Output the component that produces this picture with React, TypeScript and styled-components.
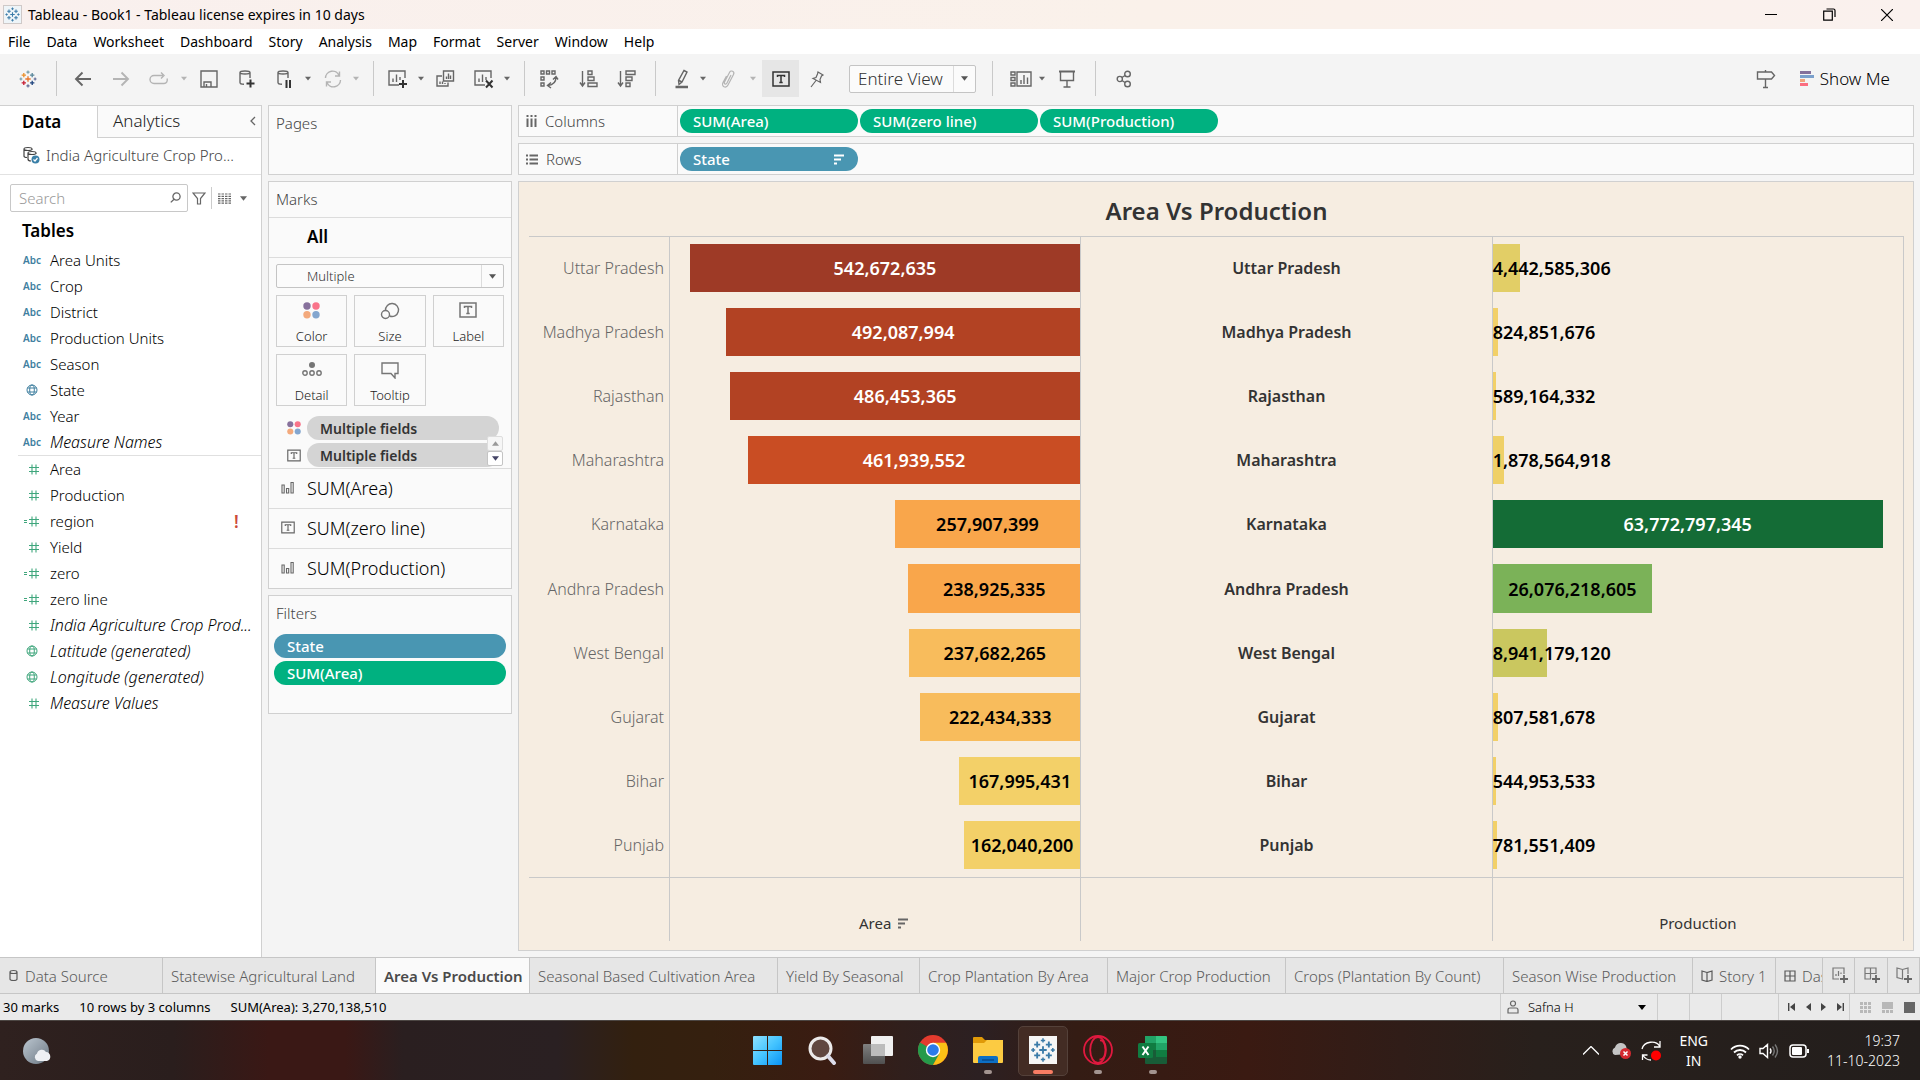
import React from "react";
import styled, { createGlobalStyle, css } from "styled-components";

const GlobalStyle = createGlobalStyle`
  *, *::before, *::after { box-sizing: border-box; }
  body { margin: 0; }
  body, button, input, select {
    font-family: "Noto Sans", "Open Sans", sans-serif;
    font-size: 15px;
    font-weight: 350;
    color: #000;
  }
  button { background: none; border: 0; padding: 0; margin: 0; cursor: pointer; }
  ul { list-style: none; margin: 0; padding: 0; }
  h1, h2, h3 { margin: 0; font-size: inherit; font-weight: inherit; }
  svg { display: block; flex: none; }
`;

const LINE = "#d0d0d0";
const INK = "#666666";
const FAINT = "#b4b4b4";
const BLUE = "#4996b2";
const GREEN = "#00b180";

/* ---------- window frame ---------- */

const Page = styled.div`
  display: flex;
  flex-direction: column;
  height: 100vh;
  min-height: 900px;
  overflow: hidden;
  background: #f4f4f4;
`;

const TitleBar = styled.header`
  flex: none;
  display: flex;
  align-items: center;
  height: 29px;
  padding: 0 4px 0 3px;
  background: linear-gradient(90deg, #f9f0ee, #faf1ea 60%, #faf1ee);
`;

const AppBadge = styled.span`
  display: flex;
  padding: 1px;
  background: #eef4f8;
  border: 1px solid #cfc9c8;
`;

const WindowTitle = styled.h1`
  flex: 1;
  padding-left: 6px;
  font-size: 14px;
  font-weight: 400;
`;

const WindowButton = styled.button`
  display: flex;
  align-items: center;
  justify-content: center;
  width: 58px;
  height: 29px;
`;

const MenuBar = styled.nav`
  flex: none;
  display: flex;
  align-items: center;
  gap: 16px;
  height: 25px;
  padding-left: 8px;
  background: #fff;
  button { font-size: 14px; font-weight: 400; }
`;

/* ---------- toolbar ---------- */

const ToolBar = styled.div`
  flex: none;
  display: flex;
  align-items: center;
  height: 51px;
  padding: 0 30px 2px 0;
`;

const Tool = styled.button<{ $gap?: number; $on?: boolean; $faint?: boolean }>`
  display: flex;
  align-items: center;
  justify-content: center;
  margin-left: ${(p) => p.$gap ?? 14}px;
  width: ${(p) => (p.$on ? 37 : 24)}px;
  height: 37px;
  color: ${(p) => (p.$faint ? FAINT : INK)};
  ${(p) => p.$on && css`background: #e6e6e6; color: #333;`}
`;

const DropMark = styled(Tool)`
  width: 10px;
`;

const Separator = styled.span<{ $gap: number }>`
  width: 1px;
  height: 35px;
  margin-left: ${(p) => p.$gap}px;
  background: #c9c9c9;
`;

const SelectBox = styled.label<{ $height: number }>`
  display: grid;
  grid-template-columns: 1fr 22px;
  align-items: center;
  height: ${(p) => p.$height}px;
  border: 1px solid #c4c4c4;
  border-radius: 2px;
  background: #fbfbfb;
  select {
    grid-area: 1 / 1 / 2 / 3;
    height: 100%;
    width: 100%;
    padding: 0 8px;
    border: 0;
    background: none;
    appearance: none;
    color: #333;
  }
  span {
    grid-area: 1 / 2;
    display: flex;
    align-items: center;
    justify-content: center;
    height: 100%;
    border-left: 1px solid #dcdcdc;
    color: #555;
    pointer-events: none;
  }
`;

const ViewSelect = styled(SelectBox)`
  width: 127px;
  margin-left: 20px;
  select { font-size: 17px; }
`;

const MarkSelect = styled(SelectBox)`
  margin: 6px 7px 0;
  select { font-size: 13px; padding-left: 30px; }
`;

const Spacer = styled.span`
  flex: 1;
`;

const ShowMe = styled.button`
  display: flex;
  align-items: center;
  gap: 6px;
  margin-left: 22px;
  font-size: 17px;
`;

/* ---------- workspace ---------- */

const Workspace = styled.main`
  flex: 1;
  min-height: 0;
  display: grid;
  grid-template-columns: 262px 244px 1fr;
  column-gap: 6px;
`;

const DataPane = styled.aside`
  display: flex;
  flex-direction: column;
  background: #fff;
  border: 1px solid ${LINE};
  border-width: 1px 1px 0 0;
`;

const PaneTabs = styled.div`
  display: grid;
  grid-template-columns: 97px 1fr;
  height: 32px;
`;

const PaneTab = styled.button<{ $active?: boolean }>`
  display: flex;
  align-items: center;
  justify-content: space-between;
  padding: 0 5px 2px ${(p) => (p.$active ? 22 : 15)}px;
  font-size: 17px;
  ${(p) => p.$active
    ? css`font-weight: 600;`
    : css`background: #fafafa; border: 1px solid ${LINE}; border-width: 0 0 1px 1px; color: #222;`}
`;

const SourceRow = styled.button`
  flex: none;
  display: flex;
  align-items: center;
  gap: 6px;
  height: 37px;
  padding: 0 0 2px 22px;
  border-bottom: 1px solid #e2e2e2;
  color: #444;
`;

const SearchRow = styled.div`
  display: flex;
  align-items: center;
  padding: 9px 0 0 10px;
  color: ${INK};
`;

const SearchBox = styled.label`
  display: flex;
  align-items: center;
  width: 178px;
  height: 28px;
  padding: 0 6px 1px 8px;
  border: 1px solid #c8c8c8;
  border-radius: 2px;
  input {
    flex: 1;
    min-width: 0;
    border: 0;
    padding: 0;
    outline: 0;
    background: none;
  }
  input::placeholder { color: #999; opacity: 1; }
`;

const IconButton = styled.button<{ $width: number }>`
  display: flex;
  align-items: center;
  justify-content: center;
  width: ${(p) => p.$width}px;
  height: 22px;
  color: ${INK};
`;

const ThinRule = styled.span`
  width: 1px;
  height: 22px;
  margin: 0 1px;
  background: #ccc;
`;

const TablesTitle = styled.h2`
  padding: 7px 0 4px 22px;
  font-size: 17px;
  line-height: 24px;
  font-weight: 600;
`;

const FieldList = styled.ul`
  & + & {
    margin-left: 18px;
    border-top: 1px solid #e0e0e0;
  }
  & + & li { padding-left: 4px; }
`;

const Field = styled.li<{ $italic?: boolean }>`
  display: grid;
  grid-template-columns: 28px 1fr auto;
  align-items: center;
  height: 26px;
  padding: 0 22px;
  white-space: nowrap;
  ${(p) => p.$italic && css`font-size: 16px; font-style: italic; padding-right: 4px;`}
`;

const FieldKind = styled.span<{ $blue?: boolean }>`
  display: flex;
  justify-content: center;
  width: 20px;
  font-size: 10px;
  font-weight: 600;
  font-style: normal;
  color: ${(p) => (p.$blue ? "#3f7f9f" : "#3fa67c")};
`;

const Alert = styled.span`
  width: 5px;
  color: #cc4b3a;
  font-size: 17px;
  font-weight: 600;
`;

/* ---------- shelves ---------- */

const Cards = styled.div`
  display: flex;
  flex-direction: column;
  gap: 6px;
`;

const Card = styled.section<{ $height: number }>`
  flex: none;
  min-height: ${(p) => p.$height}px;
  background: #fafafa;
  border: 1px solid ${LINE};
`;

const CardTitle = styled.h3`
  display: flex;
  align-items: center;
  height: 35px;
  padding: 0 0 1px 7px;
  color: #444;
`;

const MarkLayer = styled.button<{ $active?: boolean }>`
  display: grid;
  grid-template-columns: 38px 1fr;
  align-items: center;
  width: 100%;
  height: 40px;
  padding-bottom: 2px;
  border-top: 1px solid #dcdcdc;
  text-align: left;
  font-size: ${(p) => (p.$active ? 17 : 18)}px;
  font-weight: ${(p) => (p.$active ? 600 : 300)};
  svg { justify-self: center; color: ${INK}; }
  span { grid-column: 2; }
`;

const MarkOptions = styled.div`
  border-top: 1px solid #dcdcdc;
`;

const MarkButtons = styled.div`
  display: grid;
  grid-template-columns: repeat(3, 1fr);
  gap: 7px;
  padding: 7px;
`;

const MarkButton = styled.button`
  display: flex;
  flex-direction: column;
  align-items: center;
  justify-content: space-between;
  height: 52px;
  padding: 6px 0 1px;
  border: 1px solid ${LINE};
  font-size: 13px;
  line-height: 18px;
  color: #222;
  svg { color: #757575; }
`;

const Encodings = styled.div`
  position: relative;
  display: flex;
  flex-direction: column;
  gap: 3px;
  padding: 3px 12px 1px 18px;
`;

const Encoding = styled.div`
  display: grid;
  grid-template-columns: 14px 1fr;
  align-items: center;
  gap: 6px;
  color: ${INK};
`;

const Pill = styled.button<{ $tone: string }>`
  display: flex;
  align-items: center;
  justify-content: space-between;
  height: 24px;
  padding: 0 13px;
  border-radius: 12px;
  background: ${(p) => p.$tone};
  color: #fff;
  font-weight: 500;
`;

const FieldsPill = styled(Pill)`
  color: #333;
  font-size: 14px;
  font-weight: 600;
`;

const Spinner = styled.div`
  position: absolute;
  right: 8px;
  bottom: 2px;
  display: grid;
  button {
    display: flex;
    align-items: center;
    justify-content: center;
    width: 16px;
    height: 15px;
    border: 1px solid #c4c4c4;
    border-radius: 2px;
    background: #fff;
    color: #446;
  }
  button:first-child { color: #999; border-color: #ddd; background: #f6f6f6; }
`;

const FilterPills = styled.div`
  display: grid;
  gap: 3px;
  padding: 3px 5px;
`;

const Canvas = styled.div`
  min-width: 0;
  display: flex;
  flex-direction: column;
  gap: 6px;
  padding: 0 6px 6px 0;
`;

const Shelf = styled.section`
  flex: none;
  display: grid;
  grid-template-columns: 159px 1fr;
  height: 32px;
  background: #fafafa;
  border: 1px solid ${LINE};
`;

const ShelfName = styled.h3`
  display: flex;
  align-items: center;
  gap: 8px;
  padding-left: 7px;
  border-right: 1px solid ${LINE};
  color: #444;
  svg { color: ${INK}; }
`;

const ShelfPills = styled.div`
  display: flex;
  align-items: center;
  gap: 2px;
  padding-left: 2px;
  button { width: 178px; }
`;

/* ---------- chart ---------- */

const Sheet = styled.section`
  flex: 1;
  min-height: 0;
  display: flex;
  flex-direction: column;
  padding: 0 9px 9px 10px;
  background: #f6ede1;
  border: 1px solid ${LINE};
`;

const SheetTitle = styled.h2`
  display: flex;
  align-items: center;
  justify-content: center;
  height: 54px;
  padding-top: 2px;
  font-size: 24px;
  font-weight: 600;
  color: #333;
`;

const Chart = styled.div`
  flex: 1;
  min-height: 0;
  display: flex;
  flex-direction: column;
  border-right: 1px solid #c9c9c9;
  box-shadow: inset 0 1px #c9c9c9;
`;

const ChartRow = styled.div`
  flex: 1;
  min-height: 0;
  display: grid;
  grid-template-columns: 140px repeat(3, 1fr);
`;

const AxisRow = styled(ChartRow)`
  flex: none;
  height: 64px;
  border-top: 1px solid #c9c9c9;
`;

const StateLabel = styled.div`
  display: flex;
  align-items: center;
  justify-content: flex-end;
  padding-right: 5px;
  font-size: 16px;
  font-weight: 300;
  color: #666;
`;

const Cell = styled.div`
  display: flex;
  align-items: center;
  justify-content: center;
  border-left: 1px solid #c9c9c9;
  font-size: 16px;
  font-weight: 600;
  color: #333;
`;

const AxisCell = styled(Cell)`
  align-items: flex-end;
  padding-bottom: 8px;
  font-size: 15px;
  font-weight: 400;
`;

const AxisName = styled.span`
  position: relative;
  svg { position: absolute; left: calc(100% + 6px); top: 5px; color: ${INK}; }
`;

const BarCell = styled.div<{ $side: "start" | "end" }>`
  display: grid;
  grid-template-columns: 100%;
  align-items: center;
  justify-items: ${(p) => p.$side};
  border-left: 1px solid #c9c9c9;
`;

const Bar = styled.div`
  grid-area: 1 / 1;
  height: 75%;
`;

const BarLabel = styled.span<{ $light?: boolean }>`
  grid-area: 1 / 1;
  text-align: center;
  font-size: 18px;
  font-weight: 600;
  white-space: nowrap;
  color: ${(p) => (p.$light ? "#fff" : "#000")};
`;

/* ---------- sheet tabs and status ---------- */

const SheetTabs = styled.nav`
  flex: none;
  display: flex;
  height: 37px;
  background: #e6e6e6;
  border: 1px solid #c6c6c6;
  border-width: 1px 0;
`;

const SheetTab = styled.button<{ $width: number; $active?: boolean }>`
  flex: 0 0 ${(p) => p.$width}px;
  display: flex;
  align-items: center;
  gap: 6px;
  padding-left: 8px;
  border-right: 1px solid #c6c6c6;
  overflow: hidden;
  white-space: nowrap;
  color: ${(p) => (p.$active ? "#4a4a4a" : "#5a5a5a")};
  ${(p) => p.$active && css`background: #fafafa; font-weight: 600;`}
`;

const NewTab = styled.button`
  flex: 1;
  display: flex;
  align-items: center;
  justify-content: center;
  padding-left: 3px;
  border-right: 1px solid #c6c6c6;
  color: #777;
`;

const StatusBar = styled.footer`
  flex: none;
  display: flex;
  align-items: stretch;
  height: 26px;
  background: #eaeaea;
  font-size: 13px;
`;

const StatusTexts = styled.div`
  flex: 1;
  display: flex;
  align-items: center;
  gap: 20px;
  padding-left: 3px;
  font-weight: 400;
`;

const StatusCell = styled.div<{ $width: number }>`
  display: flex;
  align-items: center;
  width: ${(p) => p.$width}px;
  border-left: 1px solid #cdcdcd;
`;

const UserButton = styled.button`
  flex: 1;
  display: grid;
  grid-template-columns: 21px 1fr 10px;
  align-items: center;
  padding: 0 9px 0 6px;
  font-size: 13px;
  text-align: left;
  svg:first-child { color: ${INK}; }
`;

const NavButtons = styled.div<{ $color: string }>`
  flex: 1;
  display: flex;
  justify-content: space-around;
  padding-left: 4px;
  color: ${(p) => p.$color};
  button { color: inherit; }
`;

/* ---------- taskbar ---------- */

const TaskBar = styled.footer`
  flex: none;
  display: grid;
  grid-template-columns: 1fr auto 1fr;
  align-items: center;
  height: 60px;
  border-top: 1px solid #4c4643;
  background: linear-gradient(90deg, #2f211f 0, #2a1e1d 9%, #3a1815 14%, #3a1815 18%, #2a1f20 21%, #2a2022 29%, #33200f 33%, #35200f 37%, #3a1c12 43%, #301f1c 47%, #2c2022 51%, #341c14 56%, #3a1a12 65%, #301d18 73%, #28201c 80%, #231e1c 100%);
`;

const Weather = styled.button`
  justify-self: start;
  margin-left: 22px;
`;

const Apps = styled.div`
  display: flex;
  gap: 5px;
`;

const AppButton = styled.button<{ $active?: boolean }>`
  display: grid;
  grid-template-rows: 1fr 4px;
  justify-items: center;
  align-items: center;
  width: 50px;
  height: 50px;
  padding: 4px 0 1px;
  border-radius: 5px;
  border: 1px solid ${(p) => (p.$active ? "#54413a" : "transparent")};
  background: ${(p) => (p.$active ? "#432c24" : "none")};
`;

const RunMark = styled.span<{ $active?: boolean }>`
  width: ${(p) => (p.$active ? 20 : 8)}px;
  height: 4px;
  border-radius: 2px;
  background: ${(p) => (p.$active ? "#f97d64" : "#a39490")};
`;

const Tray = styled.div`
  display: flex;
  align-items: center;
  justify-content: flex-end;
  padding-right: 20px;
  color: #fff;
`;

const TrayButton = styled.button<{ $gap: number }>`
  margin-right: ${(p) => p.$gap}px;
  color: #fff;
`;

const Language = styled(TrayButton)`
  font-size: 14px;
  font-weight: 400;
  line-height: 20px;
`;

const Clock = styled.button`
  color: #fff;
  font-size: 14px;
  line-height: 20px;
  text-align: right;
`;

/* ---------- icons ---------- */

type IconProps = { w?: number; h?: number; box?: string; sw?: number; children?: React.ReactNode };
const Icon = ({ w = 22, h = 22, box, sw = 1.4, children }: IconProps) => (
  <svg width={w} height={h} viewBox={box ?? `0 0 ${w} ${h}`} fill="none" stroke="currentColor" strokeWidth={sw} aria-hidden="true">
    {children}
  </svg>
);

const Caret = ({ w = 7, h = 5, up = false }) => (
  <svg width={w} height={h} viewBox="0 0 8 5" fill="currentColor" aria-hidden="true">
    <path d={up ? "M0 5h8L4 0z" : "M0 0h8L4 5z"} />
  </svg>
);

const plus = (x: number, y: number, r: number) => `M${x - r} ${y}h${2 * r}M${x} ${y - r}v${2 * r}`;
const TableauLogo = ({ size, mono }: { size: number; mono?: boolean }) => {
  const marks: [number, number, number, string][] = [
    [15, 15, 4.5, "#e8762c"],
    [8, 8.5, 3.6, "#eb912c"], [22, 8.5, 3.6, "#59879b"], [8, 21.5, 3.6, "#c72035"], [22, 21.5, 3.6, "#1f447e"],
    [15, 3.5, 2.6, "#7199a6"], [15, 26.5, 2.6, "#5c6692"], [3.2, 15, 2.4, "#7199a6"], [26.8, 15, 2.4, "#5c6692"],
  ];
  return (
    <svg width={size} height={size} viewBox="0 0 30 30" fill="none" aria-hidden="true">
      {marks.map(([x, y, r, c], i) => (
        <path key={i} d={plus(x, y, r)} stroke={mono ? "#3b7ba8" : c} strokeWidth={r > 3 ? 2.2 : 1.8} />
      ))}
    </svg>
  );
};

const BoldPlus = ({ x, y }: { x: number; y: number }) => <path d={plus(x, y, 4)} stroke="#333" strokeWidth="2" />;

const Arrow = ({ flip = false }) => (
  <Icon w={18} h={16} sw={1.9}>{flip ? <path d="M1 8h15M9.500 1.500L16 8l-6.500 6.500" /> : <path d="M17 8H2M8.500 1.500L2 8l6.500 6.500" />}</Icon>
);
const Redo = () => <Icon w={20} h={16}><path d="M14 4.500H5a4 4 0 0 0 0 8h10a3.500 3.500 0 0 0 3-5M12 1.500l3 3-3 3" /></Icon>;
const Save = () => <Icon w={18} h={18}><path d="M1 1h16v16H1zM4 17v-5h7v5M6.500 14v3" /></Icon>;
const Cylinder = () => <path d="M2 3.500C2 1.500 12 1.500 12 3.500S2 5.500 2 3.500v10c0 1 2 1.800 4 1.800M12 3.500V9" />;
const DbPlus = () => <Icon w={18} h={20}><Cylinder /><BoldPlus x={12.500} y={14.500} /></Icon>;
const DbPause = () => <Icon w={18} h={20}><Cylinder /><path d="M10.500 11v8M14 11v8" stroke="#333" strokeWidth="2" /></Icon>;
const Refresh = () => <Icon w={20} h={18}><path d="M2.500 8A7 7 0 0 1 16 5.500M17.500 10A7 7 0 0 1 4 12.500M16.500 1.500v4.500H12M3.500 16.500V12H8" /></Icon>;
const SheetFrame = () => <path d="M17 9V2H1v14h10M5 13V9.500M8.500 13V5.500M12 11V8" />;
const NewSheet = () => <Icon w={20} h={20}><SheetFrame /><BoldPlus x={15} y={15} /></Icon>;
const ClearSheet = () => <Icon w={20} h={20}><SheetFrame /><path d="M12 11.500l6.500 7M18.500 11.500l-6.500 7" stroke="#333" strokeWidth="2" /></Icon>;
const Duplicate = () => <Icon w={20} h={18}><path d="M7.500 1h10v10h-10zM6 6H1v10h11v-3.500M10.500 9V6.500M12.500 9V3.500M14.500 9V5.500M4 14v-2.500M6.500 14v-2.500M9 14v-1" /></Icon>;
const Swap = () => <Icon w={20} h={20}><path d="M2 2h3v3H2zM7.500 2h3v3h-3zM13 2h3v3h-3zM2 8h3v3H2zM2 14h3v3H2zM17 8c0 5-3 8-8 8.500M14 10.500l3-3 2 3M12 13.500l-3.500 3 3.500 2.500" /></Icon>;
const SortAsc = () => <Icon w={20} h={18}><path d="M3.500 1v14M1 12.500L3.500 16 6 12.500M9 1h4v3.500H9zM9 7h6v3.500H9zM9 13h9v3.500H9z" /></Icon>;
const SortDesc = () => <Icon w={20} h={18}><path d="M3.500 1v14M1 12.500L3.500 16 6 12.500M9 1h9v3.500H9zM9 7h6v3.500H9zM9 13h4v3.500H9z" /></Icon>;
const Highlight = () => <Icon w={18} h={20}><path d="M11 1.500l3 1.500-5 10-3 2.500-.5-4zM6 11.500l3 1.500" /><path d="M2.500 18h12.500" strokeWidth="2.500" /></Icon>;
const Clip = () => <Icon w={16} h={20} sw={1.2}><path d="M11 6l-4 8c-1 2-3.500 1-2.500-1l5-9.500c1.500-3 5.500-1 4 2l-5.500 10.500c-2 4-7 1.500-5-2.500L6.500 7" /></Icon>;
const TextFrame = ({ w = 18, h = 16 }) => (
  <Icon w={w} h={h} box="0 0 18 16" sw={1.500}><path d="M1 1h16v14H1zM5.500 6V4.500h7V6M9 4.500v7M7.300 11.500h3.400" /></Icon>
);
const Pin = () => <Icon w={16} h={18} sw={1.2}><path d="M9 2l5 3-1.500 1-1.500 3.500.5 3-7.500-4L7 7.500 8.500 4zM7 10.500L2 17" /></Icon>;
const CardsIcon = () => <Icon w={22} h={16}><path d="M1 1h4v3H1zM1 6.500h4v3H1zM1 12h4v3H1zM7 1h14v14H7zM11 13V9M14 13V4M17.500 13V6.500" /></Icon>;
const Present = () => <Icon w={18} h={18}><path d="M1 1.500h16" strokeWidth="2" /><path d="M2.500 2v8.500h13V2M9 10.500V17M5.500 17h7" /></Icon>;
const Share = () => <Icon w={16} h={18}><circle cx="3.800" cy="9" r="2.600" /><circle cx="11.500" cy="4" r="2.800" /><circle cx="11.500" cy="14" r="2.800" /><path d="M6 7.500l3-2M6 10.500l3 2" /></Icon>;
const Signpost = () => <Icon w={20} h={20}><path d="M9.500 1v2M1.500 3h14l3 3.500-3 3.500h-14zM9.500 10v8M7 18.500h5" /></Icon>;
const ShowMeIcon = () => (
  <svg width="14" height="16" aria-hidden="true">
    <path fill="#84709b" d="M0 0h11v3H0z" /><path fill="#7ba0cc" d="M0 4h14v3H0z" /><path fill="#f0a57c" d="M0 8h5v3H0z" /><path fill="#fb6e80" d="M0 12h8v3H0z" />
  </svg>
);
const ColorDots = ({ size = 17 }) => (
  <svg width={size} height={size} viewBox="0 0 17 17" aria-hidden="true">
    <circle cx="4" cy="4" r="3.700" fill="#87719c" /><circle cx="13" cy="4" r="3.700" fill="#f9748a" />
    <circle cx="4" cy="12.800" r="3.700" fill="#f3a97c" /><circle cx="13" cy="12.800" r="3.700" fill="#83a6cf" />
  </svg>
);
const SizeIcon = () => <Icon w={20} h={18}><path d="M5.500 8.500A6.500 6.500 0 1 1 9.500 14" /><circle cx="5.500" cy="12.500" r="4" /></Icon>;
const DetailIcon = () => <Icon w={20} h={16}><circle cx="10" cy="4" r="3" fill="currentColor" stroke="none" /><circle cx="3" cy="12" r="2.200" /><circle cx="10" cy="12" r="2.200" /><circle cx="17" cy="12" r="2.200" /></Icon>;
const Bubble = () => <Icon w={18} h={18}><path d="M1 2h16v10.500h-3V17l-4-4.500H1z" /></Icon>;
const MiniBars = () => <Icon w={14} h={14} sw={1.1}><path d="M1 4h2.200v8H1zM5.500 7.500h2.200V12H5.500zM10 1.500h2.200V12H10z" /></Icon>;
const ColumnsIcon = () => <Icon w={11} h={12} sw={2}><path d="M1.500 0v2M5.500 0v2M9.500 0v2M1.500 3.500V12M5.500 3.500V12M9.500 3.500V12" /></Icon>;
const RowsIcon = () => <Icon w={12} h={11} sw={2}><path d="M0 1.500h2M0 5.500h2M0 9.500h2M3.500 1.500H12M3.500 5.500H12M3.500 9.500H12" /></Icon>;
const SortBars = () => <Icon w={12} h={11} sw={2}><path d="M1 1.500h10M1 5.500h7M1 9.500h3" /></Icon>;
const Hash = ({ calc = false }) => <Icon w={16} h={11} sw={1.100}>{calc && <path d="M0 4.500h3M0 6.500h3" />}<path d="M5 3.500h10M5 7.500h10M8 .5v10M12 .5v10" /></Icon>;
const Globe = () => <Icon w={12} h={12} sw={1}><circle cx="6" cy="6" r="5" /><ellipse cx="6" cy="6" rx="2.300" ry="5" /><path d="M1.500 4h9M1.500 8h9" /></Icon>;
const SourceIcon = () => (
  <Icon w={18} h={18} sw={1.200}><path d="M2 3c0-2 8-2 8 0S2 5 2 3v7c0 1 1.500 1.500 3 1.500M10 3v1M6 7c0-2 8-2 8 0s-8 2-8 0v6c0 1.500 2 2 3 2M14 7v1" /><circle cx="13.500" cy="13.500" r="4" fill="#3b80a8" stroke="none" /><path d="M11.500 13.500l1.500 1.500 2.500-3" stroke="#fff" /></Icon>
);
const Lens = () => <Icon w={11} h={11} sw={1.300}><circle cx="6.500" cy="4.500" r="3.600" /><path d="M4 7.200L.8 10.400" /></Icon>;
const Funnel = () => <Icon w={14} h={13} sw={1.200}><path d="M1 1h12L8.500 6.500V12h-3V6.500z" /></Icon>;
const ListGrid = () => <Icon w={13} h={11} sw={1.200}><path d="M0 1h13M0 3.300h13M0 5.600h13M0 7.900h13M0 10.200h13" strokeDasharray="2.500 1" /></Icon>;
const DashIcon = () => <Icon w={12} h={12} sw={1.200}><path d="M1 1h10v10H1zM1 6h10M6 1v10" /></Icon>;
const StoryIcon = () => <Icon w={12} h={12} sw={1.200}><path d="M6 2.500L1 1v9l5 1.500 5-1.500V1zV11" /></Icon>;
const Person = () => <Icon w={12} h={14} sw={1.200}><circle cx="6" cy="3.500" r="2.500" /><path d="M1 13v-3q0-2 2-2h6q2 0 2 2v3z" /></Icon>;
const Drum = () => <Icon w={11} h={13} sw={1.200}><path d="M2 3c0-2 7-2 7 0s-7 2-7 0v7c0 2 7 2 7 0V3" /></Icon>;

const SmallPlus = () => <path d={plus(12, 12, 4)} stroke="#666" strokeWidth="1.800" />;
const NewSheetTab = () => <Icon w={17} h={17} sw={1.200}><path d="M12 7V1H1v11h6M4 9V7M6.500 9V4M9 7V5.500" /><SmallPlus /></Icon>;
const NewDashTab = () => <Icon w={17} h={17} sw={1.200}><path d="M12 7V1H1v11h6M1 6.500h11M6.500 1v11" /><SmallPlus /></Icon>;
const NewStoryTab = () => <Icon w={17} h={17} sw={1.200}><path d="M12 7V1L6.500 2.500 1 1v9.500L6.500 12V2.500" /><SmallPlus /></Icon>;

const StartIcon = () => (
  <svg width="29" height="29" aria-hidden="true">
    <defs><linearGradient id="win" x2="1" y2="1"><stop stopColor="#8fe2ff" /><stop offset=".5" stopColor="#45c4ff" /><stop offset="1" stopColor="#0a93f5" /></linearGradient></defs>
    <path fill="url(#win)" d="M0 1q0-1 1-1h13v14H0zM15 0h13q1 0 1 1v13H15zM0 15h14v14H1q-1 0-1-1zM15 15h14v13q0 1-1 1H15z" />
  </svg>
);
const SearchIcon = () => (
  <svg width="29" height="29" fill="none" aria-hidden="true"><circle cx="12.500" cy="12.500" r="10.500" fill="#604740" stroke="#eceaea" strokeWidth="3" /><path d="M20 20l6 7" stroke="#dcdcea" strokeWidth="4" strokeLinecap="round" /></svg>
);
const TaskView = () => (
  <svg width="30" height="28" aria-hidden="true">
    <defs><linearGradient id="tv" x2="0" y2="1"><stop stopColor="#808080" /><stop offset="1" stopColor="#505050" /></linearGradient></defs>
    <rect x="8" width="22" height="20" rx="1" fill="#f0f0f0" /><rect y="8" width="22" height="20" rx="1" fill="url(#tv)" /><path d="M8 8h14v12H8z" fill="#bcbcbc" />
  </svg>
);
const Chrome = () => (
  <svg width="30" height="30" viewBox="0 0 30 30" aria-hidden="true">
    <circle cx="15" cy="15" r="15" fill="#e33b2e" />
    <path d="M15 15L2 7.500A15 15 0 0 0 15 30l6.500-11.200z" fill="#259a4a" />
    <path d="M15 7.800h13.100A15 15 0 0 1 15 30l6.400-11.300z" fill="#fbc116" />
    <circle cx="15" cy="15" r="7.200" fill="#fff" /><circle cx="15" cy="15" r="5.800" fill="#2c7bea" />
  </svg>
);
const Folder = () => (
  <svg width="30" height="28" aria-hidden="true">
    <path d="M0 2q0-1 1-1h8l3 3h17q1 0 1 1v5H0z" fill="#e09a08" /><path d="M0 7h11l3-3h16v22q0 1-1 1H1q-1 0-1-1z" fill="#fccb42" />
    <path d="M5 27v-5q0-2 2-2h16q2 0 2 2v5z" fill="#0d6fc4" /><path d="M9 24h12" stroke="#084a8c" strokeWidth="1.500" />
  </svg>
);
const TableauApp = () => <svg width="28" height="28" viewBox="0 0 28 28" aria-hidden="true"><path fill="#f6f6f6" d="M0 0h28v28H0z" /><g transform="translate(1.5 1.5) scale(.833)"><TableauLogo size={30} mono /></g></svg>;
const Opera = () => <svg width="30" height="30" fill="none" stroke="#e0193f" strokeWidth="1.800" aria-hidden="true"><circle cx="15" cy="15" r="14" /><ellipse cx="15" cy="15" rx="7.800" ry="13" /><path d="M17 5.500c7-1.500 8 20-.5 19" /></svg>;
const Excel = () => (
  <svg width="29" height="28" aria-hidden="true">
    <path d="M7 0h11v7H7z" fill="#21a366" /><path d="M18 0h10q1 0 1 1v6H18z" fill="#33c481" /><path d="M7 7h11v7H7z" fill="#107c41" /><path d="M18 7h11v7H18z" fill="#21a366" />
    <path d="M7 14h11v7H7z" fill="#185c37" /><path d="M18 14h11v7H18z" fill="#107c41" /><path d="M7 21h22v6q0 1-1 1H8q-1 0-1-1z" fill="#185c37" />
    <rect y="7" width="15" height="15" rx="1.500" fill="#107c41" /><path d="M4.500 10.500l6 8.500M10.500 10.500l-6 8.500" stroke="#fff" strokeWidth="2" />
  </svg>
);
const Moon = () => (
  <svg width="30" height="28" aria-hidden="true"><defs><linearGradient id="mn" x2="1" y2="1"><stop stopColor="#bcc6d0" /><stop offset="1" stopColor="#6c7884" /></linearGradient></defs>
    <circle cx="14" cy="14" r="13" fill="url(#mn)" /><path d="M16 24a4 4 0 0 1-1-7.500 5 5 0 0 1 9-1.500 4.600 4.600 0 0 1 1 9z" fill="#eef0f4" /></svg>
);
const CloudError = () => <svg width="20" height="17" aria-hidden="true"><path d="M4 13a4 4 0 0 1 0-7.500A6 6 0 0 1 15 4l2 8z" fill="#c4c4c4" /><circle cx="14.500" cy="11.500" r="5.500" fill="#d42a30" /><path d="M12.500 9.500l4 4M16.500 9.500l-4 4" stroke="#fff" strokeWidth="1.500" /></svg>;
const SyncError = () => <svg width="20" height="20" fill="none" stroke="#fff" strokeWidth="1.300" aria-hidden="true"><path d="M1 8C3 0 15-1 18.500 5M19 0v6h-6M1.500 19v-5h5M2 14.500Q5 19 10 19" /><circle cx="15" cy="14.500" r="5" fill="#f00" stroke="none" /></svg>;
const Wifi = () => <svg width="20" height="16" fill="none" stroke="#fff" strokeWidth="1.800" aria-hidden="true"><path d="M1 6.500a12.500 12.500 0 0 1 18 0M4 9.500a8.500 8.500 0 0 1 12 0M7 12.300a4.300 4.300 0 0 1 6 0" /><circle cx="10" cy="14" r="1.700" fill="#fff" stroke="none" /></svg>;
const Sound = () => <svg width="20" height="16" fill="none" stroke="#fff" strokeWidth="1.400" aria-hidden="true"><path d="M1 5.500h3L8.500 1.500v13L4 10.500H1zM11 5.500q2 2.500 0 5" /><path d="M13.500 3.500q3.500 4.500 0 9M16 1.500q5 6.500 0 13" stroke="#777" /></svg>;
const Battery = () => <svg width="20" height="14" fill="none" stroke="#fff" strokeWidth="1.500" aria-hidden="true"><rect x="1" y="1" width="16" height="12" rx="3" /><rect x="3" y="3" width="10" height="8" rx="1" fill="#fff" stroke="none" /><path d="M19 5v4" strokeWidth="2" /></svg>;

/* ---------- data ---------- */

const menus = ["File", "Data", "Worksheet", "Dashboard", "Story", "Analysis", "Map", "Format", "Server", "Window", "Help"];

type FieldDef = { name: string; kind: "abc" | "geo" | "num" | "calc"; italic?: boolean; alert?: boolean };
const dimensions: FieldDef[] = [
  { name: "Area Units", kind: "abc" }, { name: "Crop", kind: "abc" }, { name: "District", kind: "abc" },
  { name: "Production Units", kind: "abc" }, { name: "Season", kind: "abc" }, { name: "State", kind: "geo" },
  { name: "Year", kind: "abc" }, { name: "Measure Names", kind: "abc", italic: true },
];
const measures: FieldDef[] = [
  { name: "Area", kind: "num" }, { name: "Production", kind: "num" }, { name: "region", kind: "calc", alert: true },
  { name: "Yield", kind: "num" }, { name: "zero", kind: "calc" }, { name: "zero line", kind: "calc" },
  { name: "India Agriculture Crop Prod...", kind: "num", italic: true },
  { name: "Latitude (generated)", kind: "geo", italic: true }, { name: "Longitude (generated)", kind: "geo", italic: true },
  { name: "Measure Values", kind: "num", italic: true },
];

type StateRow = { state: string; area: number; areaColor: string; production: number; prodColor: string };
const states: StateRow[] = [
  { state: "Uttar Pradesh", area: 542672635, areaColor: "#9e3a26", production: 4442585306, prodColor: "#e2ce66" },
  { state: "Madhya Pradesh", area: 492087994, areaColor: "#b24223", production: 824851676, prodColor: "#f2d068" },
  { state: "Rajasthan", area: 486453365, areaColor: "#b24223", production: 589164332, prodColor: "#f2d068" },
  { state: "Maharashtra", area: 461939552, areaColor: "#c94d23", production: 1878564918, prodColor: "#efd067" },
  { state: "Karnataka", area: 257907399, areaColor: "#f9a64b", production: 63772797345, prodColor: "#146c36" },
  { state: "Andhra Pradesh", area: 238925335, areaColor: "#f9a64b", production: 26076218605, prodColor: "#7bb258" },
  { state: "West Bengal", area: 237682265, areaColor: "#f8bc5c", production: 8941179120, prodColor: "#cac75f" },
  { state: "Gujarat", area: 222434333, areaColor: "#f8bc5c", production: 807581678, prodColor: "#f2d068" },
  { state: "Bihar", area: 167995431, areaColor: "#f3d068", production: 544953533, prodColor: "#f2d068" },
  { state: "Punjab", area: 162040200, areaColor: "#f3d068", production: 781551409, prodColor: "#f2d068" },
];
const AREA_AXIS = 542672635 * 1.05;
const PRODUCTION_AXIS = 63772797345 * 1.052;

const sheets: { name: string; width: number; active?: boolean; icon?: React.ReactNode }[] = [
  { name: "Data Source", width: 163, icon: <Drum /> },
  { name: "Statewise Agricultural Land", width: 213 },
  { name: "Area Vs Production", width: 154, active: true },
  { name: "Seasonal Based Cultivation Area", width: 248 },
  { name: "Yield By Seasonal", width: 142 },
  { name: "Crop Plantation By Area", width: 188 },
  { name: "Major Crop Production", width: 178 },
  { name: "Crops (Plantation By Count)", width: 218 },
  { name: "Season Wise Production", width: 189 },
  { name: "Story 1", width: 83, icon: <StoryIcon /> },
  { name: "Dashboard 1", width: 47, icon: <DashIcon /> },
];

/* ---------- parts ---------- */

const FieldRow = ({ field, blue }: { field: FieldDef; blue?: boolean }) => (
  <Field $italic={field.italic}>
    <FieldKind $blue={blue}>
      {field.kind === "abc" && "Abc"}
      {field.kind === "geo" && <Globe />}
      {field.kind === "num" && <Hash />}
      {field.kind === "calc" && <Hash calc />}
    </FieldKind>
    <span>{field.name}</span>
    {field.alert && <Alert>!</Alert>}
  </Field>
);

const ValueBar = ({ value, max, color, side }: { value: number; max: number; color: string; side: "start" | "end" }) => {
  const share = `${(value / max) * 100}%`;
  const light = value > 6e10 || (side === "end" && value > 4e8);
  return (
    <BarCell $side={side}>
      <Bar style={{ width: share, background: color }} />
      <BarLabel $light={light} style={{ minWidth: share }}>{value.toLocaleString("en-US")}</BarLabel>
    </BarCell>
  );
};

const Drop = ({ gap, faint }: { gap: number; faint?: boolean }) => (
  <DropMark $gap={gap} $faint={faint} aria-label="More options"><Caret w={6} /></DropMark>
);

export default function App() {
  return (
    <Page>
      <GlobalStyle />
      <TitleBar>
        <AppBadge><TableauLogo size={15} mono /></AppBadge>
        <WindowTitle>Tableau - Book1 - Tableau license expires in 10 days</WindowTitle>
        <WindowButton aria-label="Minimize"><Icon w={12} h={12}><path d="M0 5.500h12" stroke="#000" strokeWidth="1" /></Icon></WindowButton>
        <WindowButton aria-label="Restore"><Icon w={13} h={13}><path d="M.7 3.200h8.600v9H.7zM3.500 1h7q1.500 0 1.500 1.500V9" stroke="#000" strokeWidth="1.200" /></Icon></WindowButton>
        <WindowButton aria-label="Close"><Icon w={12} h={12}><path d="M0 0l12 12M12 0L0 12" stroke="#000" strokeWidth="1.200" /></Icon></WindowButton>
      </TitleBar>

      <MenuBar>{menus.map((m) => <button key={m}>{m}</button>)}</MenuBar>

      <ToolBar>
        <Tool $gap={16} aria-label="Start page"><TableauLogo size={18} /></Tool>
        <Separator $gap={16} />
        <Tool aria-label="Undo"><Arrow /></Tool>
        <Tool $faint aria-label="Redo"><Arrow flip /></Tool>
        <Tool $faint aria-label="Replay"><Redo /></Tool>
        <Drop gap={8} faint />
        <Tool $gap={8} aria-label="Save"><Save /></Tool>
        <Tool aria-label="New data source"><DbPlus /></Tool>
        <Tool aria-label="Pause auto updates"><DbPause /></Tool>
        <Drop gap={6} />
        <Tool $gap={8} $faint aria-label="Run update"><Refresh /></Tool>
        <Drop gap={6} faint />
        <Separator $gap={12} />
        <Tool $gap={12} aria-label="New worksheet"><NewSheet /></Tool>
        <Drop gap={6} />
        <Tool $gap={8} aria-label="Duplicate"><Duplicate /></Tool>
        <Tool aria-label="Clear sheet"><ClearSheet /></Tool>
        <Drop gap={6} />
        <Separator $gap={12} />
        <Tool $gap={12} aria-label="Swap rows and columns"><Swap /></Tool>
        <Tool $gap={16} aria-label="Sort ascending"><SortAsc /></Tool>
        <Tool aria-label="Sort descending"><SortDesc /></Tool>
        <Separator $gap={16} />
        <Tool aria-label="Highlight"><Highlight /></Tool>
        <Drop gap={4} />
        <Tool $gap={8} $faint aria-label="Group members"><Clip /></Tool>
        <Drop gap={8} faint />
        <Tool $gap={4} $on aria-label="Show mark labels"><TextFrame /></Tool>
        <Tool $gap={6} aria-label="Fix axes"><Pin /></Tool>
        <ViewSelect $height={28}>
          <select aria-label="Fit"><option>Entire View</option></select>
          <span><Caret /></span>
        </ViewSelect>
        <Separator $gap={16} />
        <Tool $gap={16} aria-label="Show/hide cards"><CardsIcon /></Tool>
        <Drop gap={4} />
        <Tool $gap={8} aria-label="Presentation mode"><Present /></Tool>
        <Separator $gap={16} />
        <Tool $gap={16} aria-label="Share"><Share /></Tool>
        <Spacer />
        <Tool aria-label="Guide"><Signpost /></Tool>
        <ShowMe><ShowMeIcon />Show Me</ShowMe>
      </ToolBar>

      <Workspace>
        <DataPane>
          <PaneTabs>
            <PaneTab $active>Data</PaneTab>
            <PaneTab>Analytics<Icon w={6} h={10} sw={1.300}><path d="M5 1L1 5l4 4" stroke={INK} /></Icon></PaneTab>
          </PaneTabs>
          <SourceRow><SourceIcon />India Agriculture Crop Pro...</SourceRow>
          <SearchRow>
            <SearchBox><input type="text" placeholder="Search" aria-label="Search fields" /><Lens /></SearchBox>
            <IconButton $width={22} aria-label="Filter fields"><Funnel /></IconButton>
            <ThinRule />
            <IconButton $width={22} aria-label="View as list"><ListGrid /></IconButton>
            <IconButton $width={16} aria-label="More"><Caret /></IconButton>
          </SearchRow>
          <TablesTitle>Tables</TablesTitle>
          <FieldList>{dimensions.map((f) => <FieldRow key={f.name} field={f} blue />)}</FieldList>
          <FieldList>{measures.map((f) => <FieldRow key={f.name} field={f} />)}</FieldList>
        </DataPane>

        <Cards>
          <Card $height={70}><CardTitle>Pages</CardTitle></Card>
          <Card $height={408}>
            <CardTitle>Marks</CardTitle>
            <MarkLayer $active><span>All</span></MarkLayer>
            <MarkOptions>
              <MarkSelect $height={24}>
                <select aria-label="Mark type"><option>Multiple</option></select>
                <span><Caret /></span>
              </MarkSelect>
              <MarkButtons>
                <MarkButton><ColorDots />Color</MarkButton>
                <MarkButton><SizeIcon />Size</MarkButton>
                <MarkButton><TextFrame />Label</MarkButton>
                <MarkButton><DetailIcon />Detail</MarkButton>
                <MarkButton><Bubble />Tooltip</MarkButton>
              </MarkButtons>
              <Encodings>
                <Encoding><ColorDots size={14} /><FieldsPill $tone="#d4d4d4">Multiple fields</FieldsPill></Encoding>
                <Encoding><TextFrame w={14} h={13} /><FieldsPill $tone="#d4d4d4">Multiple fields</FieldsPill></Encoding>
                <Spinner>
                  <button aria-label="Scroll up"><Caret up /></button>
                  <button aria-label="Scroll down"><Caret /></button>
                </Spinner>
              </Encodings>
            </MarkOptions>
            <MarkLayer><MiniBars /><span>SUM(Area)</span></MarkLayer>
            <MarkLayer><TextFrame w={14} h={13} /><span>SUM(zero line)</span></MarkLayer>
            <MarkLayer><MiniBars /><span>SUM(Production)</span></MarkLayer>
          </Card>
          <Card $height={119}>
            <CardTitle>Filters</CardTitle>
            <FilterPills>
              <Pill $tone={BLUE}>State</Pill>
              <Pill $tone={GREEN}>SUM(Area)</Pill>
            </FilterPills>
          </Card>
        </Cards>

        <Canvas>
          <Shelf>
            <ShelfName><ColumnsIcon />Columns</ShelfName>
            <ShelfPills>
              <Pill $tone={GREEN}>SUM(Area)</Pill>
              <Pill $tone={GREEN}>SUM(zero line)</Pill>
              <Pill $tone={GREEN}>SUM(Production)</Pill>
            </ShelfPills>
          </Shelf>
          <Shelf>
            <ShelfName><RowsIcon />Rows</ShelfName>
            <ShelfPills><Pill $tone={BLUE}>State<SortBars /></Pill></ShelfPills>
          </Shelf>
          <Sheet>
            <SheetTitle>Area Vs Production</SheetTitle>
            <Chart>
              {states.map((s) => (
                <ChartRow key={s.state}>
                  <StateLabel>{s.state}</StateLabel>
                  <ValueBar value={s.area} max={AREA_AXIS} color={s.areaColor} side="end" />
                  <Cell>{s.state}</Cell>
                  <ValueBar value={s.production} max={PRODUCTION_AXIS} color={s.prodColor} side="start" />
                </ChartRow>
              ))}
              <AxisRow>
                <span />
                <AxisCell><AxisName>Area<SortBars /></AxisName></AxisCell>
                <AxisCell />
                <AxisCell><AxisName>Production</AxisName></AxisCell>
              </AxisRow>
            </Chart>
          </Sheet>
        </Canvas>
      </Workspace>

      <SheetTabs>
        {sheets.map((s) => (
          <SheetTab key={s.name} $width={s.width} $active={s.active}>{s.icon}{s.name}</SheetTab>
        ))}
        <NewTab aria-label="New worksheet"><NewSheetTab /></NewTab>
        <NewTab aria-label="New dashboard"><NewDashTab /></NewTab>
        <NewTab aria-label="New story"><NewStoryTab /></NewTab>
      </SheetTabs>

      <StatusBar>
        <StatusTexts><span>30 marks</span><span>10 rows by 3 columns</span><span>SUM(Area): 3,270,138,510</span></StatusTexts>
        <StatusCell $width={157}>
          <UserButton><Person /><span>Safna H</span><Caret w={8} /></UserButton>
        </StatusCell>
        <StatusCell $width={32} />
        <StatusCell $width={32} />
        <StatusCell $width={57} />
        <StatusCell $width={71}>
          <NavButtons $color="#444">
            <button aria-label="First sheet"><Icon w={7} h={8}><path d="M.7 0v8" /><path d="M7 0v8L2 4z" fill="currentColor" stroke="none" /></Icon></button>
            <button aria-label="Previous sheet"><Icon w={5} h={8}><path d="M5 0v8L0 4z" fill="currentColor" stroke="none" /></Icon></button>
            <button aria-label="Next sheet"><Icon w={5} h={8}><path d="M0 0v8l5-4z" fill="currentColor" stroke="none" /></Icon></button>
            <button aria-label="Last sheet"><Icon w={7} h={8}><path d="M6.300 0v8" /><path d="M0 0v8l5-4z" fill="currentColor" stroke="none" /></Icon></button>
          </NavButtons>
        </StatusCell>
        <StatusCell $width={71}>
          <NavButtons $color="#b8b8b8">
            <button aria-label="Sheet sorter"><svg width="11" height="11" fill="currentColor"><path d="M0 0h3v3H0zM4 0h3v3H4zM8 0h3v3H8zM0 4h3v3H0zM4 4h3v3H4zM8 4h3v3H8zM0 8h3v3H0zM4 8h3v3H4zM8 8h3v3H8z" /></svg></button>
            <button aria-label="Filmstrip"><svg width="11" height="11" fill="currentColor"><path d="M0 0h11v7H0zM0 8h3v3H0zM4 8h3v3H4zM8 8h3v3H8z" /></svg></button>
            <button aria-label="Tabs"><svg width="11" height="11"><path fill="#666" d="M0 0h11v11H0z" /></svg></button>
          </NavButtons>
        </StatusCell>
      </StatusBar>

      <TaskBar>
        <Weather aria-label="Weather"><Moon /></Weather>
        <Apps>
          <AppButton aria-label="Start"><StartIcon /></AppButton>
          <AppButton aria-label="Search"><SearchIcon /></AppButton>
          <AppButton aria-label="Task view"><TaskView /></AppButton>
          <AppButton aria-label="Chrome"><Chrome /></AppButton>
          <AppButton aria-label="File Explorer"><Folder /><RunMark /></AppButton>
          <AppButton $active aria-label="Tableau"><TableauApp /><RunMark $active /></AppButton>
          <AppButton aria-label="Opera"><Opera /><RunMark /></AppButton>
          <AppButton aria-label="Excel"><Excel /><RunMark /></AppButton>
        </Apps>
        <Tray>
          <TrayButton $gap={12} aria-label="Hidden icons"><Icon w={16} h={9} sw={1.300}><path d="M0 8.500l8-8 8 8" /></Icon></TrayButton>
          <TrayButton $gap={10} aria-label="OneDrive"><CloudError /></TrayButton>
          <TrayButton $gap={18} aria-label="Updates"><SyncError /></TrayButton>
          <Language $gap={22}>ENG<br />IN</Language>
          <TrayButton $gap={9} aria-label="Wi-Fi"><Wifi /></TrayButton>
          <TrayButton $gap={10} aria-label="Volume"><Sound /></TrayButton>
          <TrayButton $gap={18} aria-label="Battery"><Battery /></TrayButton>
          <Clock>19:37<br />11-10-2023</Clock>
        </Tray>
      </TaskBar>
    </Page>
  );
}
